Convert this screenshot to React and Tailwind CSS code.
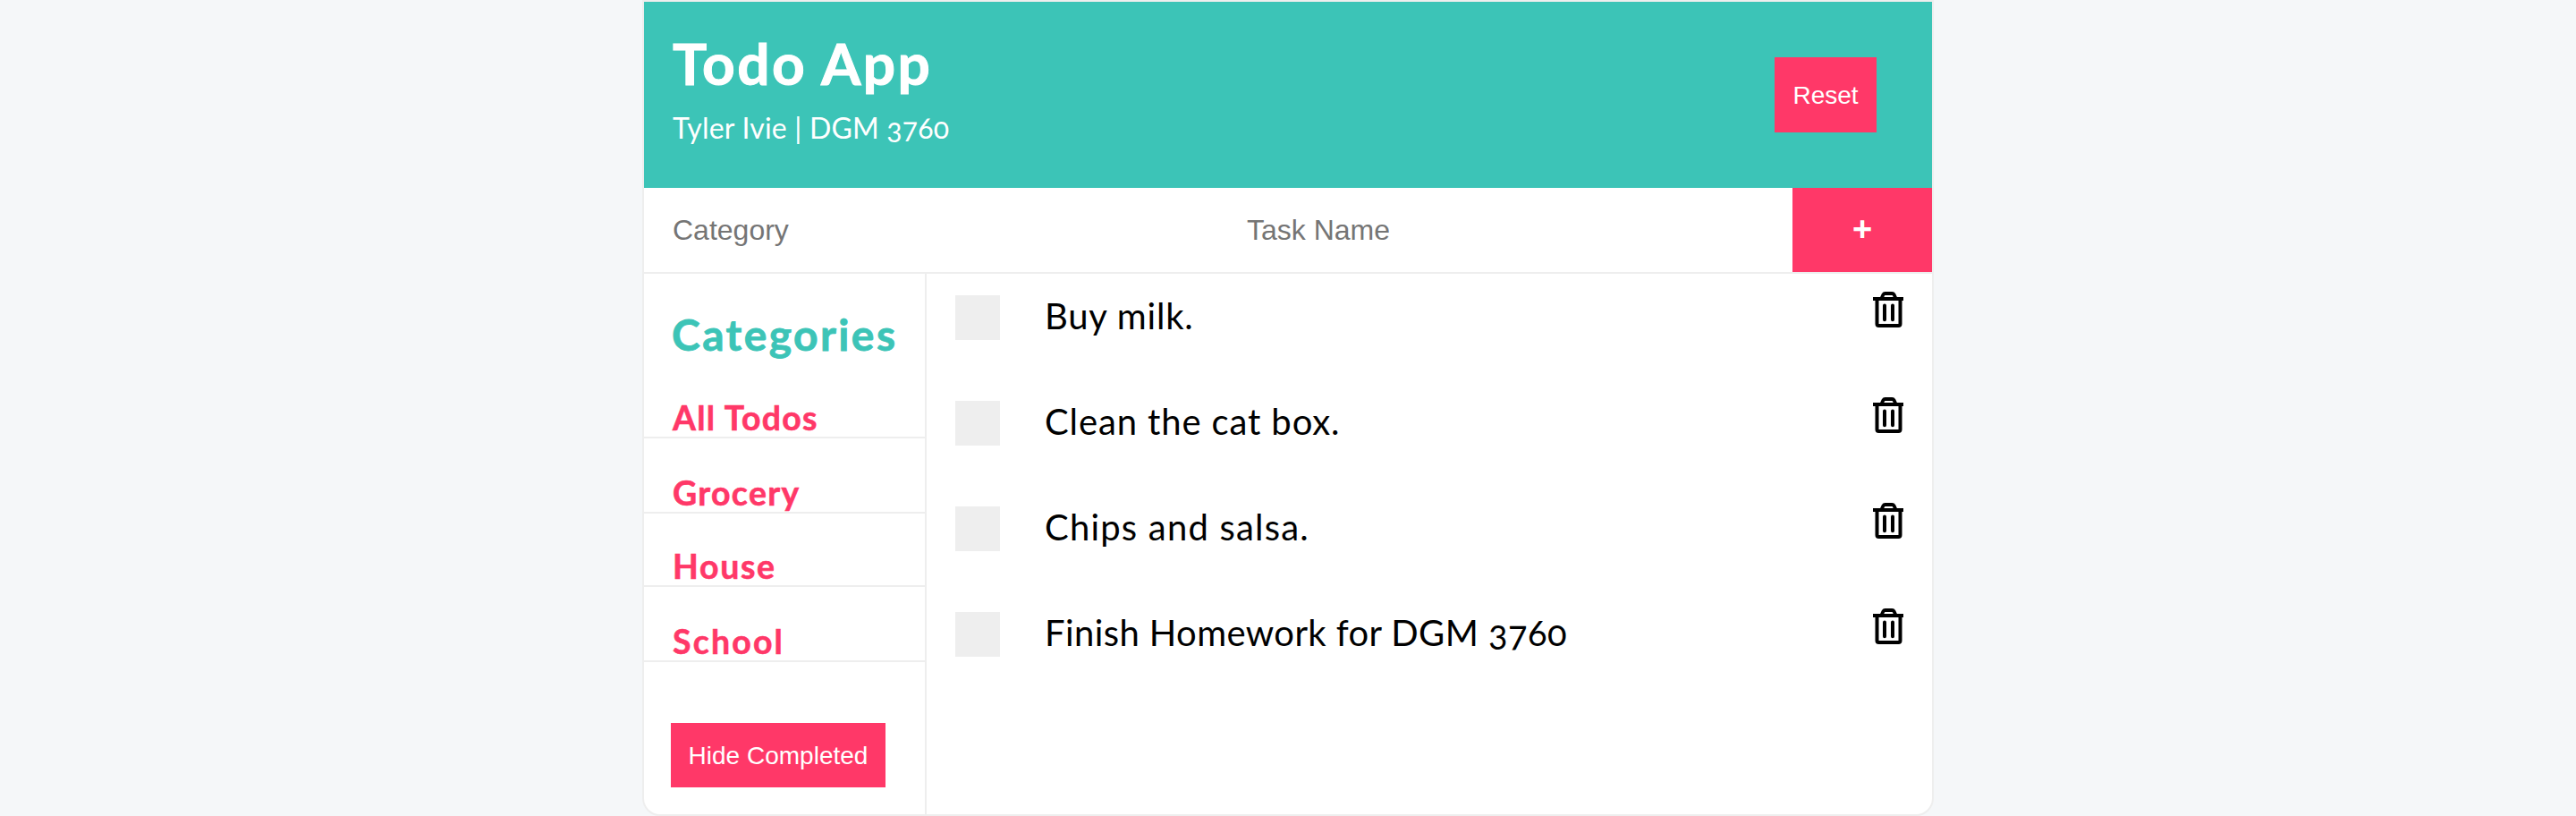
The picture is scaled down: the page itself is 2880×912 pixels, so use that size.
import React from "react";

const categories = [
  { name: "All Todos", style: "tracking-[1.3px]" },
  { name: "Grocery", style: "mt-[38px] tracking-[1.35px]" },
  { name: "House", style: "mt-[36px] tracking-[1.7px]" },
  { name: "School", style: "mt-[38px] tracking-[2.2px]" },
];

const todos = [
  { name: "Buy milk.", style: "tracking-[0.8px]" },
  { name: "Clean the cat box.", style: "tracking-[0.88px]" },
  { name: "Chips and salsa.", style: "tracking-[1.2px]" },
  { name: "Finish Homework for DGM 3760", style: "tracking-[0.4px]" },
];

function TrashIcon() {
  return (
    <svg width="34" height="40" viewBox="0 0 34 40" fill="none" stroke="#000" strokeWidth="4">
      <path d="M0 8H34" />
      <path d="M9.5 7.5L11.5 3.2Q12.2 2 13.6 2H21.4Q22.8 2 23.5 3.2L25.5 7.5" strokeWidth="3.8" />
      <path d="M4.5 8V36Q4.5 38 6.5 38H28.5Q30.5 38 30.5 36V8" />
      <path d="M13 15.5V31.2M22 15.5V31.2" strokeLinecap="round" />
    </svg>
  );
}

function Header() {
  return (
    <header className="flex h-[208px] items-start justify-between bg-[#3cc4b7] pr-[62px] pl-8 text-white">
      <div className="pt-[37px]">
        <h1 className="text-[64px] leading-[64px] font-bold tracking-[2.4px] [-webkit-text-stroke:1px_currentColor]">
          Todo App
        </h1>
        <p className="mt-[20px] text-[32px] leading-10 tracking-[0.2px]">Tyler Ivie | DGM 3760</p>
      </div>
      <button className="mt-[62px] h-[84px] w-[114px] bg-[#ff3868] pt-px font-['Liberation_Sans',sans-serif] text-[28px]">
        Reset
      </button>
    </header>
  );
}

function TaskForm() {
  return (
    <form className="flex h-24 border-b-2 border-[#eee] font-['Liberation_Sans',sans-serif] text-[32px]">
      <input className="w-[642px] pl-8 placeholder:text-[#757575]" placeholder="Category" />
      <input className="w-[642px] pl-8 placeholder:text-[#757575]" placeholder="Task Name" />
      <button type="button" className="grow bg-[#ff3868] pb-0.5 text-[38px] leading-9 font-bold text-white">
        +
      </button>
    </form>
  );
}

function Sidebar() {
  return (
    <aside className="w-[316px] border-r-2 border-[#eee] pt-[44px]">
      <h2 className="mb-[46px] pl-[31px] text-[48px] leading-[48px] font-bold tracking-[2.4px] text-[#3cc4b7] [-webkit-text-stroke:0.8px_currentColor]">
        Categories
      </h2>
      {categories.map((c) => (
        <h3
          key={c.name}
          className={`h-[46px] border-b-2 border-[#eee] pl-8 text-[37.44px] leading-[46px] font-bold text-[#ff3868] [-webkit-text-stroke:0.6px_currentColor] ${c.style}`}
        >
          {c.name}
        </h3>
      ))}
      <button className="mt-[68px] ml-[30px] h-[72px] w-[240px] bg-[#ff3868] pt-px font-['Liberation_Sans',sans-serif] text-[28px] text-white">
        Hide Completed
      </button>
    </aside>
  );
}

function TodoList() {
  return (
    <ul className="grow pr-8 pl-8">
      {todos.map((t) => (
        <li key={t.name} className="flex h-[118px] items-start">
          <span className="mt-6 h-[50px] w-[50px] bg-[#eee]" />
          <span className={`mt-[23px] ml-[50px] grow text-[40px] leading-[48px] text-black ${t.style}`}>{t.name}</span>
          <button className="mt-5">
            <TrashIcon />
          </button>
        </li>
      ))}
    </ul>
  );
}

export default function App() {
  return (
    <div className="flex h-[912px] justify-center bg-[#f5f7f9] font-['Lato',sans-serif] [font-feature-settings:'onum']">
      <main className="flex h-[912px] w-[1444px] flex-col overflow-hidden rounded-b-[20px] border-2 border-[#eee] bg-white">
        <Header />
        <TaskForm />
        <div className="flex grow">
          <Sidebar />
          <TodoList />
        </div>
      </main>
    </div>
  );
}
